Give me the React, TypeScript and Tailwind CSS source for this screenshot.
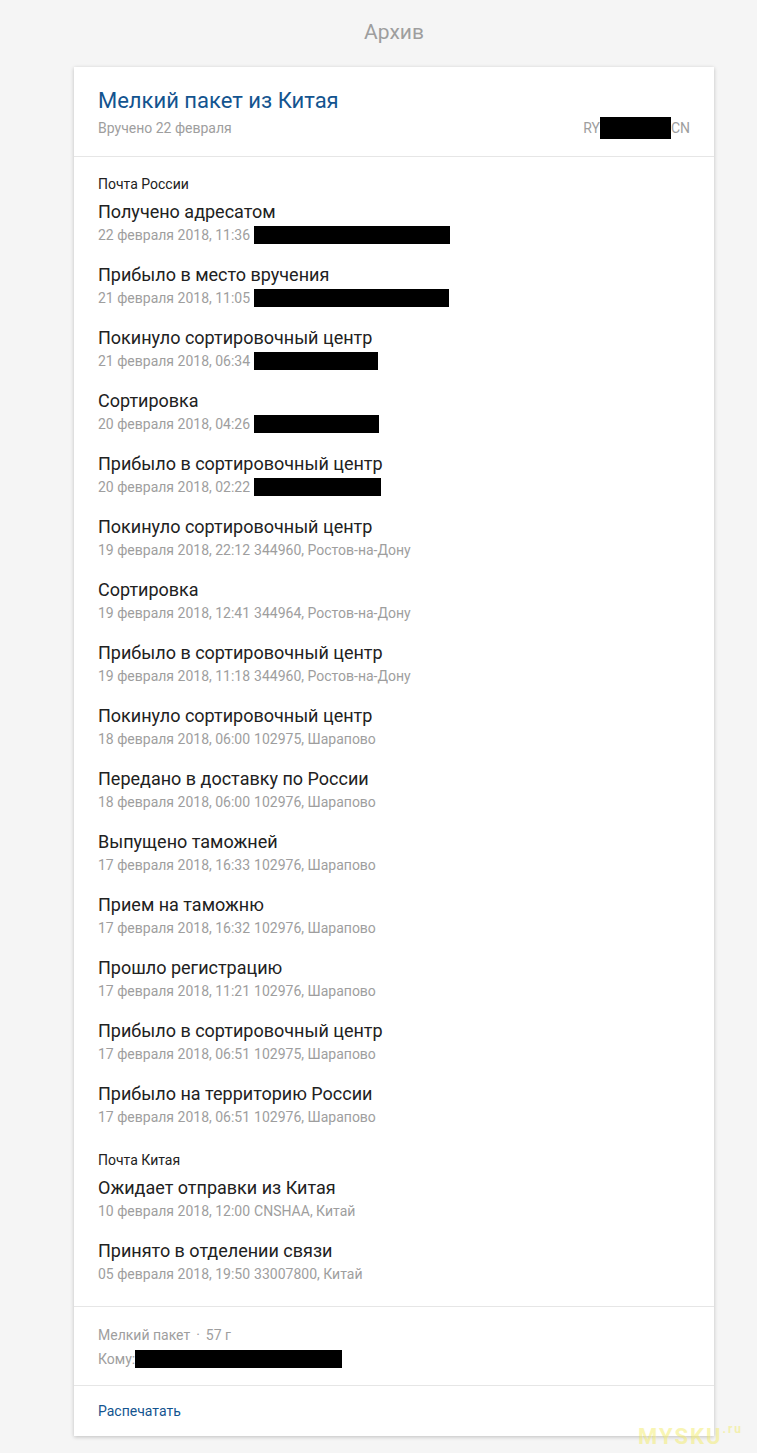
import React from "react";

type Row = { title: string; date: string; place?: string; hidden?: number };

const russia: Row[] = [
  { title: "Получено адресатом", date: "22 февраля 2018, 11:36", hidden: 196 },
  { title: "Прибыло в место вручения", date: "21 февраля 2018, 11:05", hidden: 195 },
  { title: "Покинуло сортировочный центр", date: "21 февраля 2018, 06:34", hidden: 124 },
  { title: "Сортировка", date: "20 февраля 2018, 04:26", hidden: 125 },
  { title: "Прибыло в сортировочный центр", date: "20 февраля 2018, 02:22", hidden: 127 },
  { title: "Покинуло сортировочный центр", date: "19 февраля 2018, 22:12", place: "344960, Ростов-на-Дону" },
  { title: "Сортировка", date: "19 февраля 2018, 12:41", place: "344964, Ростов-на-Дону" },
  { title: "Прибыло в сортировочный центр", date: "19 февраля 2018, 11:18", place: "344960, Ростов-на-Дону" },
  { title: "Покинуло сортировочный центр", date: "18 февраля 2018, 06:00", place: "102975, Шарапово" },
  { title: "Передано в доставку по России", date: "18 февраля 2018, 06:00", place: "102976, Шарапово" },
  { title: "Выпущено таможней", date: "17 февраля 2018, 16:33", place: "102976, Шарапово" },
  { title: "Прием на таможню", date: "17 февраля 2018, 16:32", place: "102976, Шарапово" },
  { title: "Прошло регистрацию", date: "17 февраля 2018, 11:21", place: "102976, Шарапово" },
  { title: "Прибыло в сортировочный центр", date: "17 февраля 2018, 06:51", place: "102975, Шарапово" },
  { title: "Прибыло на территорию России", date: "17 февраля 2018, 06:51", place: "102976, Шарапово" },
];

const china: Row[] = [
  { title: "Ожидает отправки из Китая", date: "10 февраля 2018, 12:00", place: "CNSHAA, Китай" },
  { title: "Принято в отделении связи", date: "05 февраля 2018, 19:50", place: "33007800, Китай" },
];

function Redacted({ width, height }: { width: number; height: number }) {
  return <span className="inline-block bg-black align-middle" style={{ width, height }} />;
}

function HistoryRow({ row }: { row: Row }) {
  return (
    <div className="flex flex-col">
      <div className="text-[18px] leading-[24px] text-[#212121]">{row.title}</div>
      <div className="mt-[1px] flex items-center text-[14px] leading-[20px] text-[#9e9e9e] whitespace-nowrap">
        <span>{row.date}</span>
        {row.place && <span className="ml-1">{row.place}</span>}
        {row.hidden && (
          <span className="ml-[4px] flex">
            <Redacted width={row.hidden} height={18} />
          </span>
        )}
      </div>
    </div>
  );
}

function Section({ label, rows, className }: { label: string; rows: Row[]; className?: string }) {
  return (
    <div className={className}>
      <div className="text-[14px] leading-[20px] text-[#212121]">{label}</div>
      <div className="mt-[6px] flex flex-col gap-[18px]">
        {rows.map((row, i) => (
          <HistoryRow key={i} row={row} />
        ))}
      </div>
    </div>
  );
}

export default function App() {
  return (
    <div className="relative min-h-[1453px] bg-[#f5f5f5] font-['Roboto',sans-serif]">
      <div className="ml-[74px] w-[640px]">
        <h1 className="pt-[18px] text-center text-[21px] leading-[28px] text-[#9e9e9e]">Архив</h1>

        <div className="mt-[21px] bg-white shadow-[0_1px_4px_rgba(0,0,0,0.22)]">
          {/* header */}
          <div className="border-b border-[#e6e6e6] px-6 pt-5 pb-[17px]">
            <div className="text-[22px] leading-[28px] text-[#13548f]">Мелкий пакет из Китая</div>
            <div className="mt-[2px] flex items-center justify-between text-[14px] leading-[20px] text-[#9e9e9e]">
              <span>Вручено 22 февраля</span>
              <span className="flex items-center">
                RY
                <Redacted width={71} height={22} />
                CN
              </span>
            </div>
          </div>

          {/* history */}
          <div className="border-b border-[#e6e6e6] px-6 pt-[17px] pb-[22px]">
            <Section label="Почта России" rows={russia} />
            <Section label="Почта Китая" rows={china} className="mt-[23px]" />
          </div>

          {/* details */}
          <div className="border-b border-[#e6e6e6] px-6 pt-[18px] pb-[16px] text-[14px] leading-[20px] text-[#9e9e9e]">
            <div className="flex items-center">
              <span>Мелкий пакет</span>
              <span className="mx-[6px]">·</span>
              <span>57 г</span>
            </div>
            <div className="mt-[4px] flex items-center">
              <span>Кому:</span>
              <Redacted width={207} height={18} />
            </div>
          </div>

          {/* actions */}
          <div className="px-6 pt-[13px] pb-[13px]">
            <a href="#" className="text-[14px] leading-[20px] text-[#13548f]">
              Распечатать
            </a>
          </div>
        </div>
      </div>

      {/* watermark */}
      <div className="pointer-events-none absolute left-[638px] top-[1420px] select-none text-[22px] font-bold tracking-[2px] text-[#f3ec6c] opacity-50">
        MYSKU<span className="align-top text-[12px]">.ru</span>
      </div>
    </div>
  );
}
